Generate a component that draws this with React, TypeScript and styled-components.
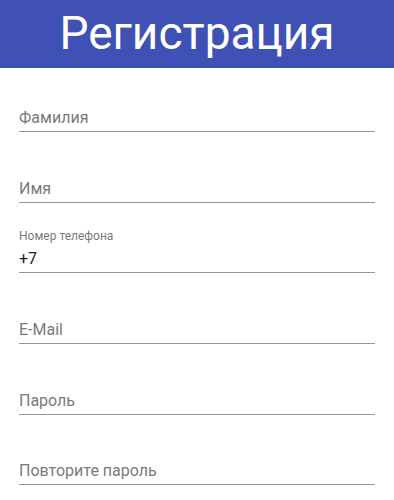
import React from 'react'
import styled, {createGlobalStyle} from 'styled-components'

const GlobalStyle = createGlobalStyle`
    html, body {
        margin: 0;
        padding: 0;
        background: #fff;
        font-family: Roboto, "Noto Sans", sans-serif;
    }
`

const Header = styled.header`
    height: 68px;
    background-color: #3f51b5;
    display: flex;
    align-items: center;
    justify-content: center;
`

const Title = styled.h1`
    margin: 0;
    color: #fff;
    font-family: Roboto, sans-serif;
    font-weight: 400;
    font-size: 46px;
    line-height: 1;
    padding-bottom: 2px;
`

const Form = styled.form`
    display: flex;
    flex-direction: column;
    gap: 22.7px;
    padding: 16px 19px 0;
`

const Field = styled.label`
    height: 48px;
    display: flex;
    flex-direction: column;
    justify-content: flex-end;
    border-bottom: 1px solid rgba(0, 0, 0, 0.42);
    box-sizing: border-box;
`

const SmallLabel = styled.span`
    font-size: 12px;
    line-height: 14px;
    color: #7a7a7a;
`

const Input = styled.input`
    border: none;
    outline: none;
    padding: 6px 0 4px;
    margin: 0;
    background: transparent;
    font-family: Roboto, sans-serif;
    font-size: 16px;
    line-height: 19px;
    height: 19px;
    color: #212121;

    &::placeholder {
        color: #7a7a7a;
        opacity: 1;
    }
`

interface IField {
    label: string;
    type?: string;
    value?: string;
}

const fields: IField[] = [
    {label: "Фамилия"},
    {label: "Имя"},
    {label: "Номер телефона", type: "tel", value: "+7"},
    {label: "E-Mail", type: "email"},
    {label: "Пароль", type: "password"},
    {label: "Повторите пароль", type: "password"},
]

const App = () => {
    return (
    <div>
        <GlobalStyle/>
        <Header>
            <Title>Регистрация</Title>
        </Header>
        <Form>
            {fields.map(f => (
                <Field key={f.label}>
                    {f.value !== undefined && <SmallLabel>{f.label}</SmallLabel>}
                    <Input
                        type={f.type || "text"}
                        placeholder={f.value === undefined ? f.label : undefined}
                        defaultValue={f.value}
                    />
                </Field>
            ))}
        </Form>
    </div>
    )
}

export default App
